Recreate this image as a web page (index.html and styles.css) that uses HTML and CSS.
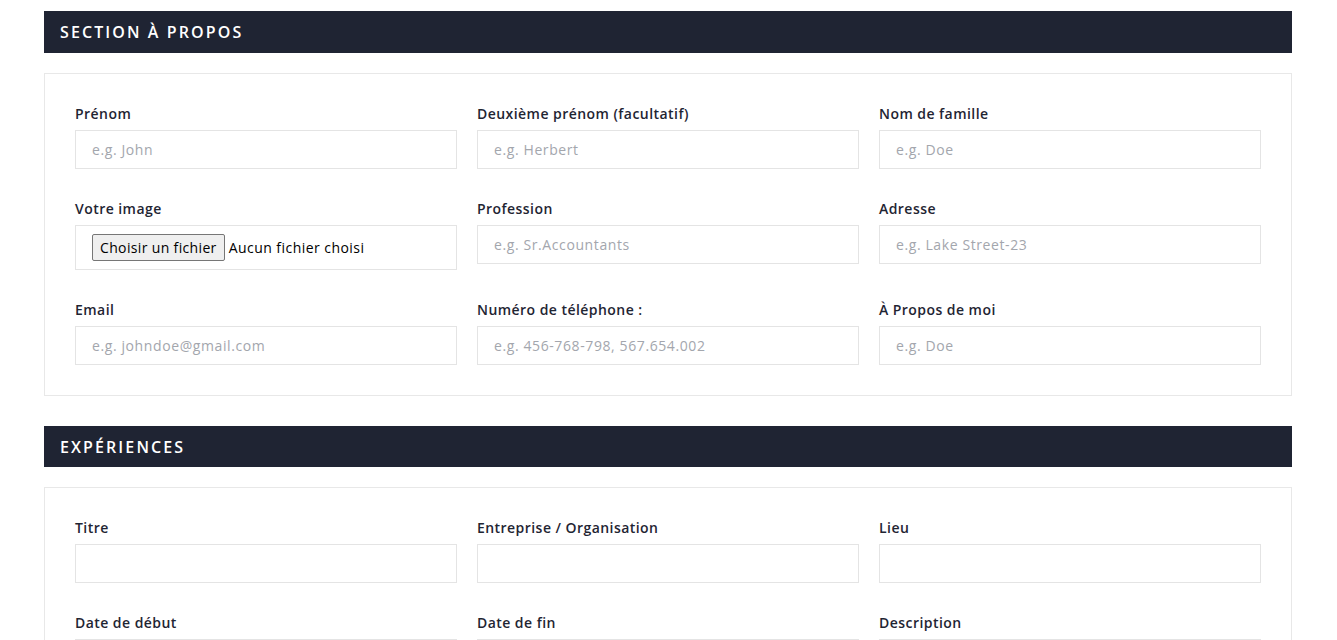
FILE: index.html
```html
<!DOCTYPE html>
<html lang="fr">
<head>
<meta charset="utf-8">
<title>CV</title>
<link rel="stylesheet" href="styles.css">
</head>
<body>
<div class="page">
  <section class="section">
    <h2 class="section-title">Section à propos</h2>
    <div class="card">
      <div class="grid">
        <div class="field">
          <label class="label">Prénom</label>
          <input class="input" type="text" placeholder="e.g. John">
        </div>
        <div class="field">
          <label class="label">Deuxième prénom (facultatif)</label>
          <input class="input" type="text" placeholder="e.g. Herbert">
        </div>
        <div class="field">
          <label class="label">Nom de famille</label>
          <input class="input" type="text" placeholder="e.g. Doe">
        </div>
        <div class="field">
          <label class="label">Votre image</label>
          <div class="file-box">
            <button class="file-btn" type="button">Choisir un fichier</button>
            <span class="file-name">Aucun fichier choisi</span>
          </div>
        </div>
        <div class="field">
          <label class="label">Profession</label>
          <input class="input" type="text" placeholder="e.g. Sr.Accountants">
        </div>
        <div class="field">
          <label class="label">Adresse</label>
          <input class="input" type="text" placeholder="e.g. Lake Street-23">
        </div>
        <div class="field">
          <label class="label">Email</label>
          <input class="input" type="text" placeholder="e.g. johndoe@gmail.com">
        </div>
        <div class="field">
          <label class="label">Numéro de téléphone :</label>
          <input class="input" type="text" placeholder="e.g. 456-768-798, 567.654.002">
        </div>
        <div class="field">
          <label class="label">À Propos de moi</label>
          <input class="input" type="text" placeholder="e.g. Doe">
        </div>
      </div>
    </div>
  </section>

  <section class="section">
    <h2 class="section-title">Expériences</h2>
    <div class="card">
      <div class="grid">
        <div class="field">
          <label class="label">Titre</label>
          <input class="input" type="text">
        </div>
        <div class="field">
          <label class="label">Entreprise / Organisation</label>
          <input class="input" type="text">
        </div>
        <div class="field">
          <label class="label">Lieu</label>
          <input class="input" type="text">
        </div>
        <div class="field">
          <label class="label">Date de début</label>
          <input class="input" type="text">
        </div>
        <div class="field">
          <label class="label">Date de fin</label>
          <input class="input" type="text">
        </div>
        <div class="field">
          <label class="label">Description</label>
          <input class="input" type="text">
        </div>
      </div>
    </div>
  </section>
</div>
</body>
</html>
```

FILE: styles.css
```css
* { box-sizing: border-box; }
html, body { margin: 0; padding: 0; background: #fff; }
body {
  font-family: "Open Sans", "Noto Sans", sans-serif;
  color: #1f2533;
}
.page {
  padding: 11px 45px 0 44px;
}
.section { margin-bottom: 30px; }
.section-title {
  margin: 0;
  height: 42px;
  display: flex;
  align-items: center;
  padding: 0 16px;
  background: #1f2433;
  color: #fff;
  font-size: 16px;
  font-weight: 600;
  letter-spacing: 2.1px;
  text-transform: uppercase;
}
.section + .section .section-title { height: 41px; }
.card {
  margin-top: 20px;
  border: 1px solid #e8e8e8;
  padding: 30px 30px 30px;
}
.grid {
  display: grid;
  grid-template-columns: repeat(3, 1fr);
  column-gap: 20px;
  row-gap: 30px;
}
.field { display: flex; flex-direction: column; }
.label {
  height: 20px;
  line-height: 20px;
  font-size: 14px;
  font-weight: 600;
  letter-spacing: 0.45px;
  color: #1f2533;
  margin-bottom: 6px;
}
.input {
  height: 39px;
  border: 1px solid #e4e4e4;
  padding: 0 16px 1px;
  font-family: inherit;
  font-size: 14px;
  letter-spacing: 0.6px;
  color: #1f2533;
  outline: none;
  background: #fff;
}
.input::placeholder { color: #a3a6ad; }
.file-box {
  height: 45px;
  border: 1px solid #e4e4e4;
  padding: 0 16px;
  display: flex;
  align-items: center;
  gap: 4px;
}
.file-btn {
  font-family: inherit;
  font-size: 14px;
  letter-spacing: 0.35px;
  color: #000;
  background: #efefef;
  border: 1px solid #767676;
  border-radius: 2px;
  padding: 2px 7px;
  height: 27px;
  line-height: 20px;
}
.file-name { font-size: 14px; letter-spacing: 0.45px; color: #000; }
```
